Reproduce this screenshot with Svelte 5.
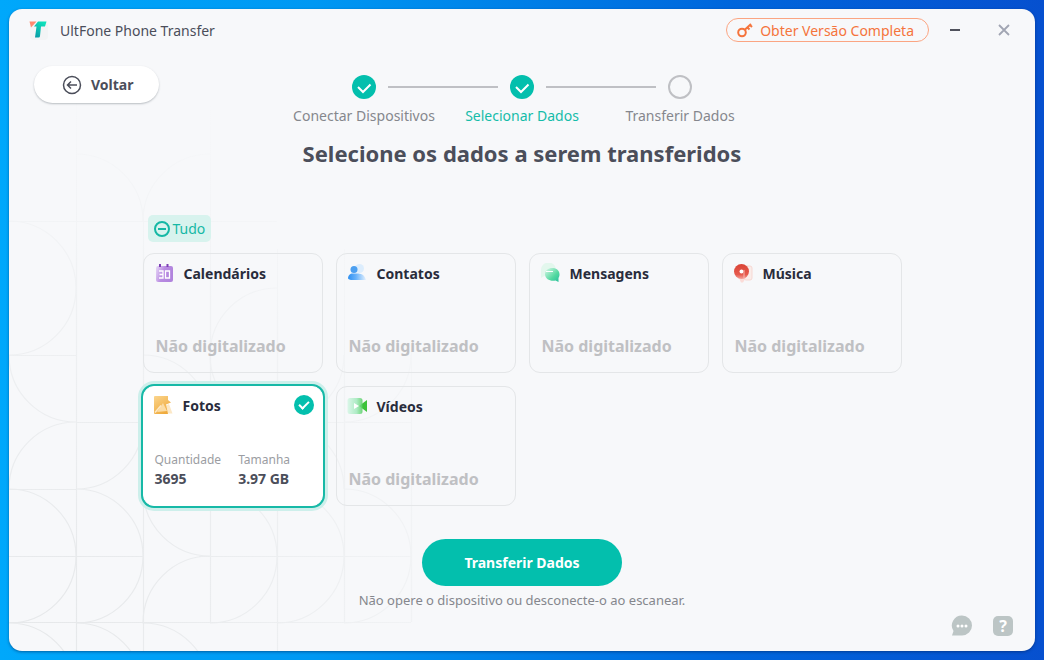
<script>
  const steps = [
    { label: 'Conectar Dispositivos', state: 'done' },
    { label: 'Selecionar Dados', state: 'current' },
    { label: 'Transferir Dados', state: 'todo' }
  ]

  let items = [
    { id: 'calendar', name: 'Calendários', checked: false },
    { id: 'contacts', name: 'Contatos', checked: false },
    { id: 'messages', name: 'Mensagens', checked: false },
    { id: 'music', name: 'Música', checked: false },
    { id: 'photos', name: 'Fotos', checked: true, count: '3695', size: '3.97 GB' },
    { id: 'videos', name: 'Vídeos', checked: false }
  ]

  $: selected = items.filter(item => item.checked).length
  $: all = selected === items.length
  $: some = selected > 0 && !all

  const toggleAll = () => {
    const next = !all
    items = items.map(item => ({ ...item, checked: next }))
  }
</script>

<div class="desktop">
  <div class="window">
    <svg class="pattern" width="480" height="642" viewBox="0 0 480 642" aria-hidden="true">
      <defs>
        <radialGradient id="fade" gradientUnits="userSpaceOnUse" cx="40" cy="610" r="540">
          <stop offset="0" stop-color="#e6e8ea" />
          <stop offset="0.4" stop-color="#eceef0" />
          <stop offset="1" stop-color="#f7f8fa" />
        </radialGradient>
      </defs>
      <g fill="none" stroke="url(#fade)" stroke-width="1.2">
        <path d="M67.500 80V642M134.500 200V642M201.500 80V613M268.500 240V642M335.500 240V613M402.500 340V613" />
        <path d="M0 212.500H268M0 346.500H67M67 413.500H402M0 480.500H67M0 547.500H134M190 547.500H402M0 613.500H402" />
        <path d="M0 212a67 67 0 0 1 67 67a67 67 0 0 1-67 67a67 67 0 0 0 67 67a67 67 0 0 0-67 67" />
        <path d="M134 413a67 67 0 0 1-67 67a67 67 0 0 1 67 67a67 67 0 0 1-67 67a67 67 0 0 1 67 67" />
        <path d="M0 480a67 67 0 0 1 67 67a67 67 0 0 1-67 67a67 67 0 0 1 67 67" />
        <path d="M134 480a67 67 0 0 0 67 67a67 67 0 0 0-67 67a67 67 0 0 1 67 67" />
        <path d="M201 480a67 67 0 0 1 67 67a67 67 0 0 1-67 67M268 480a67 67 0 0 1 67 67a67 67 0 0 1-67 67M335 480a67 67 0 0 1 67 67a67 67 0 0 1-67 67" />
        <path d="M134 212a67 67 0 0 0-67-67M134 212a67 67 0 0 1 67-67M201 346a67 67 0 0 1 67-67M134 346a67 67 0 0 1 67 67" />
        <path d="M335 346a67 67 0 0 1-67 67a67 67 0 0 1-67-67M402 346a67 67 0 0 1-67 67M335 480a67 67 0 0 0-67-67" />
      </g>
    </svg>

    <header>
      <svg class="logo" width="20" height="20" viewBox="0 0 20 20" aria-hidden="true">
        <defs>
          <linearGradient id="logo-t" x1="0" y1="1" x2="0.6" y2="0">
            <stop offset="0" stop-color="#0795a4" />
            <stop offset="1" stop-color="#0fe0bb" />
          </linearGradient>
        </defs>
        <rect x="1" y="2" width="18" height="18" rx="4" fill="#f3f4f5" />
        <path d="M0.500 1.500h7L2 7.500z" fill="#ff8a70" />
        <path d="M9 1.500h8.500l-1.500 5h-4l-1 9.500a1.500 1.500 0 0 1-1.500 1.500H6l1.500-11H5z" fill="url(#logo-t)" />
      </svg>
      <span class="title">UltFone Phone Transfer</span>
      <button class="upgrade">
        <svg width="16" height="16" viewBox="0 0 16 16" fill="none" stroke="#f5743c" stroke-width="2" aria-hidden="true">
          <circle cx="5" cy="10.500" r="3.800" />
          <path d="M7.800 7.800L14 2M10 5l2.500 2.500M12.500 2.500l2.500 2.500" />
        </svg>
        Obter Versão Completa
      </button>
      <button class="control" aria-label="Minimizar">
        <svg width="12" height="12" viewBox="0 0 12 12"><path d="M1 6h10" stroke="#50525c" stroke-width="2" /></svg>
      </button>
      <button class="control" aria-label="Fechar">
        <svg width="12" height="12" viewBox="0 0 12 12"><path d="M1 1l10 10M11 1L1 11" stroke="#a1a5b3" stroke-width="1.800" /></svg>
      </button>
    </header>

    <div class="top">
      <button class="back">
        <svg width="20" height="20" viewBox="0 0 20 20" fill="none" stroke="#4b4e5a" stroke-width="1.500" aria-hidden="true">
          <circle cx="10" cy="10" r="8.500" />
          <path d="M15 10H6M9 6.500L5.500 10L9 13.500" />
        </svg>
        Voltar
      </button>
      <ol>
        {#each steps as { label, state }}
          <li class={state}>
            <span class="dot">
              {#if state !== 'todo'}
                <svg width="24" height="24" viewBox="0 0 24 24" aria-hidden="true">
                  <path d="M6 12l5 5l7.500-7.500" fill="none" stroke="#fff" stroke-width="2" />
                </svg>
              {/if}
            </span>
            {label}
          </li>
        {/each}
      </ol>
    </div>

    <h1>Selecione os dados a serem transferidos</h1>

    <main>
      <label class="all">
        <input type="checkbox" checked={all} indeterminate={some} on:change={toggleAll} />
        Tudo
      </label>

      <div class="cards">
        {#each items as item (item.id)}
          <label class="card" class:selected={item.checked}>
            <span class="head">
              <svg width="20" height="20" viewBox="0 0 20 20" aria-hidden="true">
                {#if item.id === 'calendar'}
                  <defs>
                    <linearGradient id="cal" x2="1" y2="0.300">
                      <stop offset="0" stop-color="#e8daf7" />
                      <stop offset="0.500" stop-color="#b98be2" />
                      <stop offset="1" stop-color="#b184dd" />
                    </linearGradient>
                  </defs>
                  <rect x="2" y="3" width="17" height="16" rx="2" fill="url(#cal)" />
                  <path d="M6 1v3M13.500 1v3" stroke="#7c3fb5" stroke-width="2" />
                  <path d="M5 8h4v7H5M5.500 11.500H9M11.500 8h4v7h-4z" fill="none" stroke="#fff" stroke-width="1.300" />
                {:else if item.id === 'contacts'}
                  <defs>
                    <linearGradient id="con">
                      <stop offset="0" stop-color="#2e8ff0" />
                      <stop offset="0.450" stop-color="#69b2fa" />
                      <stop offset="1" stop-color="#e3f0fd" />
                    </linearGradient>
                  </defs>
                  <circle cx="12.500" cy="5.500" r="4.500" fill="#dcedfd" />
                  <circle cx="7" cy="6.500" r="3.500" fill="#4c9ff0" />
                  <path d="M1 15c1-5 4-4.500 7-4.500s9-1 11 6.500H6c-3 0-5-.500-5-2z" fill="url(#con)" />
                {:else if item.id === 'messages'}
                  <defs>
                    <linearGradient id="msg" x2="1" y2="1">
                      <stop offset="0" stop-color="#ddf8ea" />
                      <stop offset="0.600" stop-color="#54d9a0" />
                      <stop offset="1" stop-color="#26bd9c" />
                    </linearGradient>
                  </defs>
                  <path d="M1 15V7a7 6.500 0 0 1 15-1z" fill="#e3f7ed" />
                  <path d="M12.500 5c4 0 7 2.500 7 6.500c0 1.700-.500 2.500-1 3.500v4l-3-1.500c-5 1-10-1-10.500-6c0-4 3-6.500 7.500-6.500z" fill="url(#msg)" />
                  <path d="M6 8.500h7" stroke="#fff" />
                {:else if item.id === 'music'}
                  <defs>
                    <linearGradient id="mus" x2="0" y2="1">
                      <stop offset="0" stop-color="#d94336" />
                      <stop offset="0.700" stop-color="#e65a4d" />
                      <stop offset="1" stop-color="#f4a39b" />
                    </linearGradient>
                  </defs>
                  <rect x="11" y="3" width="8" height="14" rx="2" fill="#faece9" stroke="#f7d8d3" />
                  <path d="M5 13h9l-4 6.500H8z" fill="#fbdcd8" />
                  <circle cx="8.500" cy="8.500" r="7.500" fill="url(#mus)" />
                  <circle cx="8.500" cy="8.500" r="2" fill="#fff" />
                  <path d="M11 7v8" stroke="#f7b8b0" />
                {:else if item.id === 'photos'}
                  <defs>
                    <linearGradient id="pho" x2="0.600" y2="1">
                      <stop offset="0" stop-color="#fbd58d" />
                      <stop offset="1" stop-color="#efaa3c" />
                    </linearGradient>
                  </defs>
                  <path d="M8 13l8-4l3.500 9.500H8z" fill="#fce8c6" />
                  <path d="M1 2a1 1 0 0 1 1-1h13v4l3 2.500l-5 2L15 19H2a1 1 0 0 1-1-1z" fill="url(#pho)" />
                  <path d="M4 17l6-9l4 8z" fill="#fbdca5" />
                  <path d="M2 17.500l6-7" stroke="#fde9c7" stroke-width="1.500" />
                {:else}
                  <defs>
                    <linearGradient id="vid">
                      <stop offset="0" stop-color="#d6f6e6" />
                      <stop offset="0.600" stop-color="#a2e9bc" />
                      <stop offset="1" stop-color="#58cf64" />
                    </linearGradient>
                  </defs>
                  <path d="M12 10l8-6v12z" fill="#3cc23a" />
                  <rect x="0.500" y="2" width="15" height="16" rx="2.500" fill="url(#vid)" opacity="0.850" />
                  <path d="M7 7l5 3l-5 3z" fill="#fff" />
                {/if}
              </svg>
              <span class="name">{item.name}</span>
              <input type="checkbox" bind:checked={item.checked} />
            </span>
            {#if item.count}
              <span class="stats">
                <span>Quantidade <strong>{item.count}</strong></span>
                <span>Tamanha <strong>{item.size}</strong></span>
              </span>
            {:else}
              <span class="empty">Não digitalizado</span>
            {/if}
          </label>
        {/each}
      </div>
    </main>

    <button class="transfer">Transferir Dados</button>
    <p>Não opere o dispositivo ou desconecte-o ao escanear.</p>

    <footer>
      <button aria-label="Comentários">
        <svg width="22" height="22" viewBox="0 0 22 22">
          <path d="M11 0.500A10 10 0 1 1 11 20.500H1l1.500-4.500A10 10 0 0 1 11 0.500z" fill="#bcc5c5" />
          <circle cx="7" cy="11" r="1.500" fill="#fff" />
          <circle cx="11" cy="11" r="1.500" fill="#fff" />
          <circle cx="15" cy="11" r="1.500" fill="#fff" />
        </svg>
      </button>
      <button class="help" aria-label="Ajuda">?</button>
    </footer>
  </div>
</div>

<style>
  :global(body) {
    margin: 0;
  }
  .desktop {
    box-sizing: border-box;
    min-height: 100vh;
    padding: 9px;
    display: flex;
    background: linear-gradient(to right, #00a8fb 0%, #0098f3 30%, #0066dc 70%, #0650cf 100%);
    font-family: 'Noto Sans', 'Open Sans', sans-serif;
    color: #4b4e5a;
  }
  .window {
    position: relative;
    flex: 1;
    display: flex;
    flex-direction: column;
    border-radius: 13px;
    background: #f7f8fa;
    box-shadow: 0 1px 3px rgba(0, 30, 80, 0.5);
    overflow: hidden;
  }
  .window > :not(.pattern) {
    position: relative;
  }
  .pattern {
    position: absolute;
    left: 0;
    bottom: 0;
  }
  button {
    margin: 0;
    padding: 0;
    border: 0;
    background: none;
    font: inherit;
    color: inherit;
    display: flex;
    align-items: center;
    cursor: pointer;
  }
  header {
    display: flex;
    align-items: center;
    height: 42px;
    padding: 0 18px 0 20px;
  }
  .title {
    flex: 1;
    margin-left: 11px;
    font-size: 14px;
  }
  .upgrade {
    gap: 7px;
    height: 24px;
    box-sizing: border-box;
    padding: 0 14px 0 10px;
    margin-right: 13px;
    border: 1px solid #fba582;
    border-radius: 12px;
    font-size: 14px;
    color: #f5743c;
  }
  .control {
    justify-content: center;
    width: 26px;
    height: 26px;
  }
  .control + .control {
    margin-left: 23px;
  }
  .top {
    display: grid;
    grid-template-columns: 1fr auto 1fr;
    align-items: start;
    padding: 15px 25px 0;
  }
  .back {
    justify-self: start;
    gap: 9px;
    width: 125px;
    height: 37px;
    padding-left: 28px;
    border-radius: 19px;
    background: #fff;
    box-shadow: 0 1px 2px rgba(70, 80, 90, 0.35);
    font-size: 14px;
    font-weight: 700;
  }
  ol {
    display: flex;
    margin: 0;
    padding: 9px 0 0;
    list-style: none;
  }
  li {
    position: relative;
    display: flex;
    flex-direction: column;
    align-items: center;
    gap: 6px;
    width: 158px;
    font-size: 14px;
    line-height: 22px;
    color: #85878d;
  }
  li + li::before {
    content: '';
    position: absolute;
    top: 11px;
    right: 103px;
    width: 110px;
    height: 2px;
    background: #bfc0c4;
  }
  .dot {
    box-sizing: border-box;
    width: 24px;
    height: 24px;
    border-radius: 50%;
  }
  .done .dot,
  .current .dot {
    background: #03bfad;
  }
  .todo .dot {
    border: 2px solid #bfc0c4;
  }
  .current {
    color: #15bca9;
  }
  h1 {
    margin: 10px 0 0;
    font-size: 22px;
    line-height: 32px;
    text-align: center;
  }
  main {
    width: 759px;
    margin: 46px auto 0;
  }
  .all {
    display: flex;
    align-items: center;
    gap: 3px;
    width: max-content;
    height: 27px;
    margin-left: 5px;
    padding: 0 6px;
    border-radius: 5px;
    background: #d8f3ee;
    font-size: 14px;
    color: #15b8a5;
  }
  input {
    appearance: none;
    box-sizing: border-box;
    display: grid;
    place-items: center;
    width: 16px;
    height: 16px;
    margin: 0;
    border-radius: 50%;
  }
  .all input {
    border: 2px solid #15b8a5;
  }
  .all input:indeterminate::after {
    content: '';
    width: 8px;
    height: 2px;
    background: #15b8a5;
  }
  .all input:checked:not(:indeterminate) {
    background: #15b8a5;
  }
  .cards {
    display: grid;
    grid-template-columns: repeat(4, 1fr);
    gap: 13px;
    margin-top: 11px;
  }
  .card {
    box-sizing: border-box;
    display: flex;
    flex-direction: column;
    justify-content: space-between;
    height: 120px;
    padding: 9px 11px 14px 12px;
    border: 1px solid #e4e6e8;
    border-radius: 11px;
  }
  .selected {
    padding: 8px 8px 16px 11px;
    border-color: #fff;
    background: #fff;
    box-shadow: 0 0 0 2px #17b9a7, 0 0 0 5px #cdefeb;
  }
  .head {
    display: flex;
    align-items: center;
    height: 20px;
  }
  .head svg {
    margin-left: -2px;
  }
  .name {
    flex: 1;
    margin-left: 10px;
    font-size: 14px;
    font-weight: 700;
    color: #292c3c;
  }
  .card input {
    width: 20px;
    height: 20px;
  }
  .card input:checked {
    background: #03bfad;
  }
  .card input:checked::after {
    content: '';
    width: 8px;
    height: 4px;
    margin-bottom: 3px;
    border: solid #fff;
    border-width: 0 0 2px 2px;
    transform: rotate(-45deg);
  }
  .empty {
    font-size: 16px;
    line-height: 24px;
    font-weight: 700;
    color: #bfc0c3;
  }
  .stats {
    display: flex;
    gap: 17px;
    font-size: 12px;
    line-height: 18px;
    color: #9b9da2;
  }
  .stats strong {
    display: block;
    font-size: 14px;
    line-height: 20px;
    color: #4b4e5a;
  }
  .transfer {
    align-self: center;
    justify-content: center;
    width: 200px;
    height: 47px;
    margin-top: 33px;
    border-radius: 24px;
    background: #03bfad;
    font-size: 14px;
    font-weight: 700;
    color: #fff;
  }
  p {
    margin: 4px 0 0;
    font-size: 13px;
    line-height: 20px;
    text-align: center;
    color: #85878d;
  }
  footer {
    display: flex;
    justify-content: flex-end;
    gap: 20px;
    margin-top: auto;
    padding: 0 22px 14px;
  }
  .help {
    justify-content: center;
    width: 20px;
    height: 20px;
    margin-top: 1px;
    border-radius: 5px;
    background: #bcc5c5;
    font-size: 16px;
    font-weight: 700;
    color: #fff;
  }
</style>
